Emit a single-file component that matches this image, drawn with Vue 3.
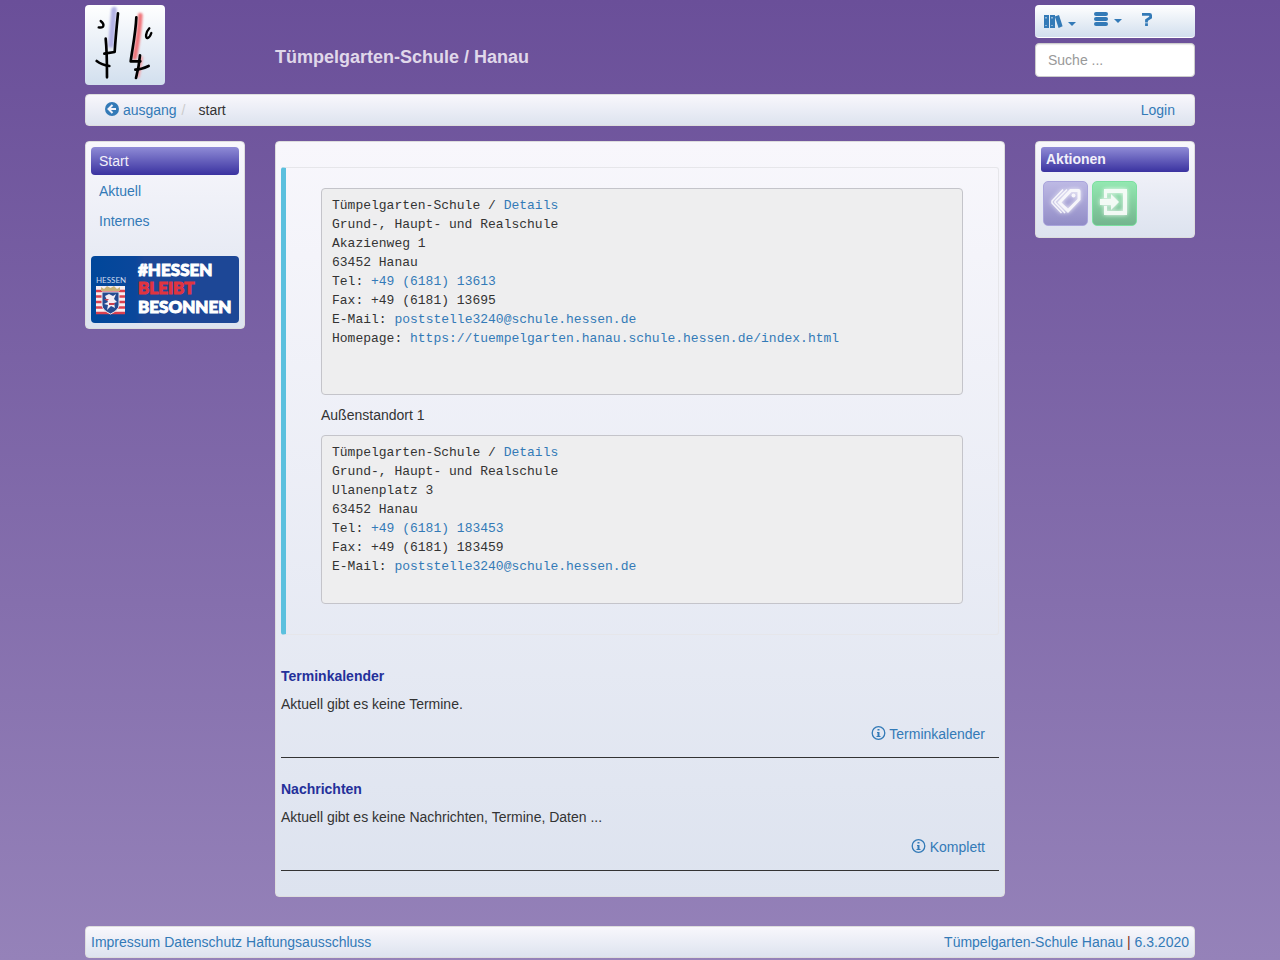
<!-- src/App.vue -->
<script setup>
import { ref } from 'vue'

const search = ref('')

const navItems = [
  { title: 'Start', active: true },
  { title: 'Aktuell' },
  { title: 'Internes' },
]

const locations = [
  {
    street: 'Akazienweg 1',
    tel: '+49 (6181) 13613',
    fax: '+49 (6181) 13695',
    mail: 'poststelle3240@schule.hessen.de',
    homepage: 'https://tuempelgarten.hanau.schule.hessen.de/index.html',
  },
  {
    title: 'Außenstandort 1',
    street: 'Ulanenplatz 3',
    tel: '+49 (6181) 183453',
    fax: '+49 (6181) 183459',
    mail: 'poststelle3240@schule.hessen.de',
  },
]

const sections = [
  {
    title: 'Terminkalender',
    text: 'Aktuell gibt es keine Termine.',
    more: 'Terminkalender',
  },
  {
    title: 'Nachrichten',
    text: 'Aktuell gibt es keine Nachrichten, Termine, Daten ...',
    more: 'Komplett',
  },
]

const footerLinks = ['Impressum', 'Datenschutz', 'Haftungsausschluss']
</script>

<template>
  <div class="container">
    <header class="row header">
      <a href="#" class="logo" aria-label="Startseite">
        <svg viewBox="0 0 240 240" width="80" height="80" fill="none" stroke-linecap="round" stroke-linejoin="round">
          <defs>
            <filter id="soft" x="-100%" y="-20%" width="300%" height="140%">
              <feGaussianBlur stdDeviation="3" />
            </filter>
          </defs>
          <g filter="url(#soft)">
            <path d="M87 14L78 120" stroke="#b4b3e6" stroke-width="17" />
            <path d="M166 30C164 80 156 120 149 158" stroke="#f0757a" stroke-width="14" />
            <path d="M170 158L160 214" stroke="#f5a5aa" stroke-width="9" />
          </g>
          <g stroke="#000" stroke-width="8">
            <path d="M99 25C95 65 91 105 89 141L58 146" />
            <path d="M62 101C66 140 66 180 66 217" />
            <path d="M35 168C45 176 60 181 73 183" />
            <path d="M47 48C60 58 58 70 41 67" stroke-width="7" />
            <path d="M154 37C152 85 142 130 137 169L166 169" />
            <path d="M165 151C163 175 158 200 153 219" />
            <path d="M151 194C166 194 180 188 191 183" />
            <path d="M193 70C182 82 180 100 188 99C193 98 197 90 199 84" stroke-width="7" />
          </g>
        </svg>
      </a>
      <h1 class="school">Tümpelgarten-Schule / Hanau</h1>
      <div class="tools">
        <nav class="toolbar">
          <a href="#" aria-label="Bücher">
            <svg width="32" height="24" viewBox="0 0 32 24" fill="currentColor">
              <path fill-rule="evenodd" d="M0 5h5v13H0zM1.500 7v1.500h1V7zM1.500 15v1h1v-1zM6 5h5v13H6zM7.500 7v1.500h1V7zM7.500 15v1h1v-1z" />
              <path d="M10.800 6.600l4.200-1.600 3.600 11.300-4 1.700z" />
              <path d="M24 12h8l-4 4z" />
            </svg>
          </a>
          <a href="#" aria-label="Menü">
            <svg width="28" height="24" viewBox="0 0 28 24" fill="currentColor">
              <rect y="2" width="14" height="4" rx="2" />
              <rect y="7" width="14" height="4" rx="2" />
              <rect y="12" width="14" height="4" rx="2" />
              <path d="M20 9h8l-4 4z" />
            </svg>
          </a>
          <a href="#" aria-label="Hilfe">
            <svg width="14" height="24" viewBox="0 0 14 24" fill="none" stroke="currentColor">
              <path d="M2 4.300h7.600q1 0 1 1v2.200L6.500 10.200v2.200M6.500 13.200v2.800" stroke-width="2.800" />
            </svg>
          </a>
        </nav>
        <input v-model="search" class="search" type="search" placeholder="Suche ..." aria-label="Suche">
      </div>
    </header>

    <nav class="bar breadcrumb">
      <div>
        <a href="#"><svg class="icon" width="14" height="14" viewBox="0 0 14 14">
          <circle cx="7" cy="7" r="7" fill="currentColor" />
          <path d="M11 7H4M7.500 3L3.500 7l4 4" fill="none" stroke="#f2f2f9" stroke-width="2" />
        </svg> ausgang</a>
        <span class="slash">/</span>
        <span>start</span>
      </div>
      <a href="#">Login</a>
    </nav>

    <div class="row main">
      <aside class="panel">
        <ul class="nav">
          <li v-for="item in navItems" :key="item.title">
            <a href="#" :class="{ active: item.active }">{{ item.title }}</a>
          </li>
        </ul>
        <a href="#" class="banner">
          <svg viewBox="0 0 148 67" role="img" aria-label="Hessen bleibt besonnen">
            <defs>
              <linearGradient id="blue">
                <stop offset="0" stop-color="#00479a" />
                <stop offset="0.3" stop-color="#0a479b" />
                <stop offset="0.36" stop-color="#1d4796" />
                <stop offset="1" stop-color="#1d4796" />
              </linearGradient>
            </defs>
            <rect width="148" height="67" fill="url(#blue)" />
            <text x="5" y="27" class="banner-small" fill="#cfdcf0">HESSEN</text>
            <rect x="5" y="30" width="29" height="28" fill="#f5eef2" />
            <path d="M5 35h29M5 40.500h29M5 46h29M5 51.500h29M5 57h29" stroke="#d9404f" stroke-width="2.600" />
            <path d="M10 35v-4l3 2 3-3 3.500 2 3.500-2 3 3 3-2v4z" fill="#c9b377" />
            <path d="M11 36h17v13q0 5-8.500 9q-8.500-4-8.500-9z" fill="#234b91" stroke="#e9e4ec" />
            <path d="M14 40l4-2 4 2 3-2-2 5 3 3-3 1 1 5-4-2-4 4 1-5-4-1 4-2zM14 53l3-3" fill="#f3edf4" />
            <path d="M13 43h5l-2 2zM18 47h6l-1 2h-5zM16 52h6" fill="#c8404e" />
            <g class="banner-text">
              <text x="47" y="20" fill="#fff" stroke="#fff">#HESSEN</text>
              <text x="47" y="38" fill="#e0343f" stroke="#e0343f">BLEIBT</text>
              <text x="47" y="57" fill="#fff" stroke="#fff">BESONNEN</text>
            </g>
          </svg>
        </a>
      </aside>

      <main class="panel content">
        <div class="callout">
          <template v-for="loc in locations" :key="loc.street">
            <p v-if="loc.title">{{ loc.title }}</p>
            <address class="address">
              <div>Tümpelgarten-Schule / <a href="#">Details</a></div>
              <div>Grund-, Haupt- und Realschule</div>
              <div>{{ loc.street }}</div>
              <div>63452 Hanau</div>
              <div>Tel: <a href="#">{{ loc.tel }}</a></div>
              <div>Fax: {{ loc.fax }}</div>
              <div>E-Mail: <a href="#">{{ loc.mail }}</a></div>
              <div v-if="loc.homepage">Homepage: <a href="#">{{ loc.homepage }}</a></div>
              <br>
              <br v-if="loc.homepage">
            </address>
          </template>
        </div>

        <section v-for="section in sections" :key="section.title" class="news">
          <h2>{{ section.title }}</h2>
          <p>{{ section.text }}</p>
          <div class="more">
            <a href="#"><svg class="icon" width="15" height="14" viewBox="0 0 15 14">
              <circle cx="7.500" cy="7" r="6.300" fill="none" stroke="currentColor" stroke-width="1.300" />
              <path d="M6.500 3h2v1.500h-2zM6 6h2.500v4h1v1h-4v-1h1V7H6z" fill="currentColor" />
            </svg> {{ section.more }}</a>
          </div>
        </section>
      </main>

      <aside class="panel">
        <h2 class="panel-title">Aktionen</h2>
        <div class="actions">
          <button type="button" class="action violet" aria-label="Schlagwörter">
            <svg width="45" height="45" viewBox="0 0 45 45" fill="none" stroke="#fff">
              <path d="M20 8.500L9 20v2l9.500 10M24 8.500L12 20.500v1l10 10.500" stroke-width="1.500" />
              <path fill-rule="evenodd" stroke="none" fill="#fff" d="M27 8h8.500q2 0 2 2v9L25 32 14.500 21.500zM28.500 11L18.500 21.500l6.500 6L34.500 18v-7z" />
              <circle cx="30.500" cy="14.500" r="2" fill="#fff" stroke="none" />
            </svg>
          </button>
          <button type="button" class="action green" aria-label="Anmelden">
            <svg width="45" height="45" viewBox="0 0 45 45" fill="#fff">
              <path d="M12 8h23v26H12v-9h3v5h16V12H15v5h-3z" />
              <path d="M8 18h11v-5l8 8-8 8v-5H8z" />
            </svg>
          </button>
        </div>
      </aside>
    </div>

    <footer class="bar footer">
      <div class="footer-links">
        <a v-for="link in footerLinks" :key="link" href="#">{{ link }}</a>
      </div>
      <div><a href="#">Tümpelgarten-Schule Hanau</a> <span class="pipe">|</span> <a href="#">6.3.2020</a></div>
    </footer>
  </div>
</template>

<style>
html {
  min-height: 100%;
  background: linear-gradient(#6a4f99, #9582b9) no-repeat fixed #9582b9;
}
</style>

<style scoped>
.container {
  max-width: 1110px;
  margin: 0 auto;
  padding: 5px 15px 2px;
  font-family: "Liberation Sans", Arial, sans-serif;
  font-size: 14px;
  line-height: 20px;
  color: #333;
}

.container * {
  box-sizing: border-box;
}

a {
  color: #337ab7;
  text-decoration: none;
}

p {
  margin: 0 0 10px;
}

.icon {
  vertical-align: -1px;
}

.row {
  display: grid;
  grid-template-columns: repeat(6, minmax(0, 1fr));
  column-gap: 30px;
  align-items: start;
}

/* Kopfzeile */
.header {
  margin-bottom: 9px;
}

.logo {
  display: flex;
  width: 80px;
  border-radius: 4px;
  background: linear-gradient(#fff, #d2dfee);
}

.school {
  grid-column: span 4;
  margin: 42px 0 0;
  font-size: 18px;
  line-height: 20px;
  color: #e0d8ea;
}

.toolbar {
  display: flex;
  gap: 18px;
  height: 33px;
  padding: 5px 9px;
  margin-bottom: 5px;
  border-radius: 4px;
  border-bottom: 1px solid #fff;
  background: linear-gradient(#fff, #d2dfee);
}

.toolbar svg {
  display: block;
}

.search {
  display: block;
  width: 100%;
  height: 34px;
  padding: 6px 12px;
  border: 1px solid #ccc;
  border-radius: 4px;
  background: #fff;
  box-shadow: inset 0 1px 1px rgba(0, 0, 0, 0.08);
  font: inherit;
  color: #555;
}

.search::placeholder {
  color: #999;
}

.bar,
.panel {
  border: 1px solid #ddd;
  border-radius: 4px;
  background: linear-gradient(#f8f7fc, #dde3ef);
}

.bar {
  display: flex;
  justify-content: space-between;
  padding: 5px;
}

.breadcrumb {
  padding: 5px 19px;
  margin-bottom: 15px;
}

.slash {
  margin: 0 13px 0 5px;
  color: #ccc;
}

/* Spalten */
.main {
  margin-bottom: 29px;
}

.panel {
  padding: 5px;
}

.content {
  grid-column: span 4;
  padding: 25px 5px;
}

.nav {
  list-style: none;
  margin: 0 0 21px;
  padding: 0;
}

.nav li {
  margin-bottom: 2px;
}

.nav a {
  display: block;
  padding: 4px 8px;
  border-radius: 4px;
}

.nav .active,
.panel-title {
  background: linear-gradient(#8f8bd6, #3a32a0);
  color: #f2f0fa;
}

.banner {
  display: block;
}

.banner svg {
  display: block;
  width: 100%;
  border-radius: 4px;
}

.banner-text {
  font: 900 17px Lato, sans-serif;
}

.banner-small {
  font: 8px Lato, sans-serif;
}

.callout {
  margin-bottom: 31px;
  padding: 20px 35px;
  border: 1px solid #e6e6ea;
  border-left: 5px solid #5bc0de;
  border-radius: 3px;
}

.address {
  padding: 7px 10px 8px;
  margin-bottom: 10px;
  border: 1px solid #c4c4ca;
  border-radius: 4px;
  background: #eeeeef;
  font: 13px/19px "Liberation Mono", "Courier New", monospace;
  overflow-wrap: anywhere;
}

.news {
  border-bottom: 1px solid #333;
  padding-bottom: 13px;
}

.news + .news {
  margin-top: 21px;
}

.news h2 {
  margin: 0 0 8px;
  font-size: 14px;
  line-height: 20px;
  color: #24309a;
}

.more {
  padding-right: 14px;
  text-align: right;
}

.panel-title {
  margin: 0 0 7px;
  padding: 2px 5px 3px;
  border-radius: 3px;
  font-size: 14px;
  line-height: 20px;
}

.actions {
  display: flex;
  flex-wrap: wrap;
  gap: 4px;
  padding: 2px 2px 6px;
}

.action {
  width: 45px;
  height: 45px;
  padding: 0;
  border: 1px solid #a9a4dc;
  border-radius: 5px;
  cursor: pointer;
}

.action svg {
  display: block;
  margin: -1px;
  opacity: 0.9;
  filter: drop-shadow(0 0 2px #fff);
}

.violet {
  background: linear-gradient(#bdb9e4, #918cc6);
}

.green {
  border-color: #7be0a0;
  background: linear-gradient(#93e8b1, #74b58f);
}

/* Fußzeile */
.footer-links {
  display: flex;
  flex-wrap: wrap;
  gap: 4px;
}

.pipe {
  color: #7a2a1a;
}
</style>
